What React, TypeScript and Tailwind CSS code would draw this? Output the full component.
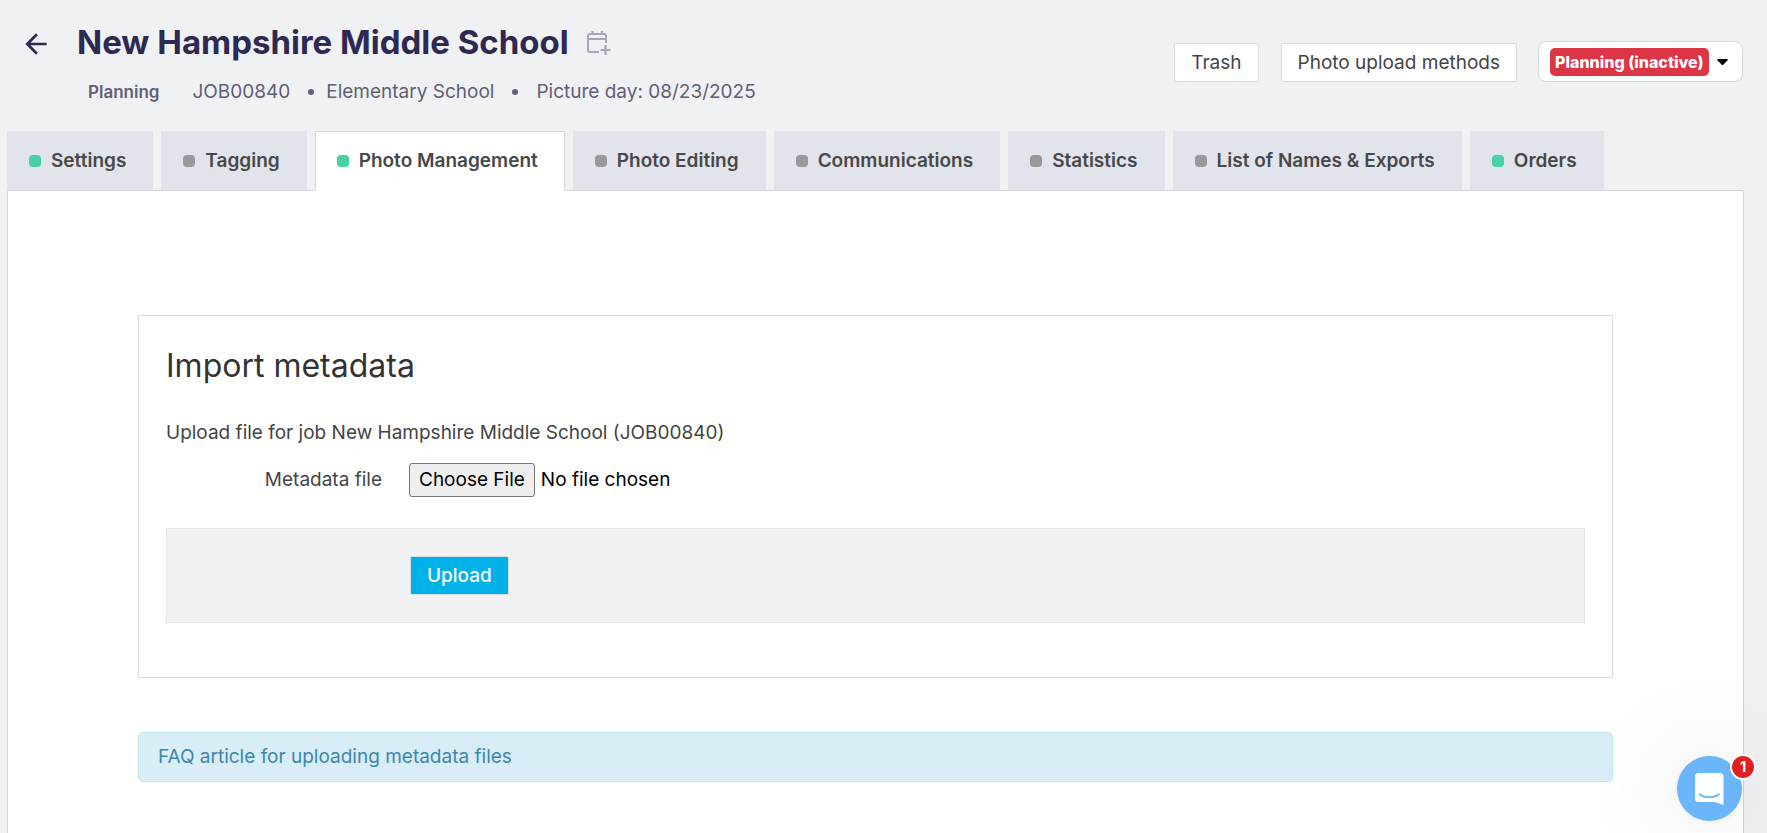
import clsx from 'clsx'

const tabs = [
  { label: 'Settings', done: true },
  { label: 'Tagging', done: false },
  { label: 'Photo Management', done: true, active: true },
  { label: 'Photo Editing', done: false },
  { label: 'Communications', done: false },
  { label: 'Statistics', done: false },
  { label: 'List of Names & Exports', done: false },
  { label: 'Orders', done: true },
]

function ArrowLeft() {
  return (
    <svg className="size-8" viewBox="0 0 24 24" fill="currentColor" aria-hidden="true">
      <path d="M20 11H7.83l5.59-5.59L12 4l-8 8 8 8 1.41-1.41L7.83 13H20v-2z" />
    </svg>
  )
}

function CalendarPlus() {
  return (
    <svg
      className="h-[26px] w-6"
      viewBox="0 0 24 26"
      fill="none"
      stroke="currentColor"
      strokeWidth="2"
      aria-hidden="true"
    >
      <path d="M12 22H3a2 2 0 0 1-2-2V6a2 2 0 0 1 2-2h14a2 2 0 0 1 2 2v7" />
      <path d="M1 9h18M5.500 1v3.500M15 1v3.500" strokeWidth="2.200" />
      <path d="M18.500 15v10M13.500 20h10" strokeWidth="2.200" />
    </svg>
  )
}

function Header() {
  return (
    <header className="flex items-start justify-between pt-5 pr-6 pl-5">
      <div className="flex">
        <a href="#" aria-label="Back" className="mt-2 h-8 text-[#2d2953]">
          <ArrowLeft />
        </a>
        <div className="ml-[25px]">
          <div className="flex items-center gap-[18px]">
            <h1 className="text-[33px] leading-[45px] font-bold text-[#2d2953]">
              New Hampshire Middle School
            </h1>
            <button type="button" aria-label="Add to calendar" className="text-[#a9a6ba]">
              <CalendarPlus />
            </button>
          </div>
          <div className="mt-[13px] flex items-center text-[19px] leading-7 text-[#625e78]">
            <span className="mr-[33px] ml-[11px] text-[17px] leading-7 font-semibold">Planning</span>
            <span>JOB00840</span>
            <span className="mr-3 ml-[18px] size-[6px] rounded-full bg-[#625e78]" />
            <span>Elementary School</span>
            <span className="mx-[18px] size-[6px] rounded-full bg-[#625e78]" />
            <span>Picture day: 08/23/2025</span>
          </div>
        </div>
      </div>

      <div className="mt-[21px] flex items-end">
        <button
          type="button"
          className="h-[39px] rounded-xs border border-[#dcdcde] bg-white px-4 text-[19px] leading-9 text-[#444]"
        >
          Trash
        </button>
        <button
          type="button"
          className="ml-[22px] h-[39px] rounded-xs border border-[#dcdcde] bg-white px-4 text-[19px] leading-9 text-[#444]"
        >
          Photo upload methods
        </button>
        <label className="ml-[21px] flex h-[41px] items-center rounded-lg border border-[#d4d6de] bg-white pr-[14px] pl-[11px]">
          <select
            aria-label="Job status"
            className="h-7 appearance-none rounded-[5px] bg-[#dc3545] px-[5px] text-base font-extrabold text-white"
          >
            <option>Planning (inactive)</option>
          </select>
          <svg className="ml-2 h-[6px] w-[11px]" viewBox="0 0 11 6" aria-hidden="true">
            <path d="M1 0h9a.8.8 0 0 1 .6 1.300L6.200 5.700a1 1 0 0 1-1.400 0L.4 1.300A.8.8 0 0 1 1 0z" />
          </svg>
        </label>
      </div>
    </header>
  )
}

function Tabs() {
  return (
    <nav className="relative z-10 mt-[25px] -mb-px flex gap-2">
      {tabs.map((tab) => (
        <a
          key={tab.label}
          href="#"
          aria-current={tab.active ? 'page' : undefined}
          className={clsx(
            'flex h-[60px] items-center border pr-[26px] pl-[21px] text-[19px] leading-7 font-semibold whitespace-nowrap text-[#484848]',
            tab.active
              ? 'border-[#d3d7dd] border-b-white bg-white'
              : 'border-[#e1e4eb] border-b-[#d3d7dd] bg-[#e1e4eb]',
          )}
        >
          <span
            className={clsx(
              'mr-[10px] size-3 rounded-[4px]',
              tab.done ? 'bg-[#48d1a5]' : 'bg-[#999]',
            )}
          />
          {tab.label}
        </a>
      ))}
    </nav>
  )
}

function ImportForm() {
  return (
    <form className="border border-[#dcdcde] px-[27px] pt-[27px] pb-[54px]">
      <h2 className="text-[32px] leading-[45px] text-[#333]">Import metadata</h2>
      <p className="mt-[31px] text-[19px] leading-7 text-[#444]">
        Upload file for job New Hampshire Middle School (JOB00840)
      </p>
      <div className="mt-4 flex items-center">
        <label htmlFor="metadata" className="w-[216px] text-right text-[19px] leading-7 text-[#444]">
          Metadata file
        </label>
        <input
          id="metadata"
          type="file"
          className="ml-[27px] h-[34px] text-[19px] text-black file:mr-[6px] file:h-[34px] file:rounded-[3px] file:border file:border-solid file:border-[#767676] file:bg-[#efefef] file:px-[9px]"
        />
      </div>
      <div className="mt-[31px] border border-[#e5e5e5] bg-[#f0f1f3] py-[27px] pl-[243px]">
        <button
          type="submit"
          className="block h-[39px] rounded-xs border border-[#d5dbe0] bg-[#00b1e8] px-4 text-[19px] leading-9 font-medium text-white"
        >
          Upload
        </button>
      </div>
    </form>
  )
}

function ChatLauncher() {
  return (
    <button
      type="button"
      aria-label="Open chat, 1 unread message"
      className="fixed right-[25px] bottom-[12px] z-20 flex size-[65px] items-center justify-center rounded-full bg-[#6bb5fb] shadow-[0_1px_6px_rgba(0,0,0,0.06),0_2px_100px_rgba(0,0,0,0.16)]"
    >
      <svg className="h-8 w-[29px]" viewBox="0 0 29 32" aria-hidden="true">
        <path
          d="M3.500 0h21.500a3.500 3.500 0 0 1 3.500 3.500V32l-8.500-3H3.500A3.500 3.500 0 0 1 0 25.500v-22A3.500 3.500 0 0 1 3.500 0z"
          fill="#fff"
        />
        <path
          d="M4.500 21.200c5.500 4 14 4 19.500 0"
          fill="none"
          stroke="#6bb5fb"
          strokeWidth="1.800"
          strokeLinecap="round"
        />
      </svg>
      <span className="absolute -top-[2px] -right-[14px] flex size-[26px] items-center justify-center rounded-full border-2 border-white bg-[#e02020] text-sm leading-none font-extrabold text-white">
        1
      </span>
    </button>
  )
}

export default function App() {
  return (
    <div className="flex min-h-screen flex-col bg-[#f0f1f3] font-['Inter',sans-serif]">
      <Header />
      <div className="mr-[23px] ml-[7px] flex grow flex-col">
        <Tabs />
        <main className="grow border border-b-0 border-[#d3d7dd] bg-white px-[130px] pt-[124px] pb-12">
          <ImportForm />
          <div className="mt-[54px] rounded-[5px] border border-[#bce8f1] bg-[#d9edf7] px-[19px] py-[10px] text-[19px] leading-7">
            <a href="#" className="text-[#3a87ad]">
              FAQ article for uploading metadata files
            </a>
          </div>
        </main>
      </div>
      <ChatLauncher />
    </div>
  )
}
